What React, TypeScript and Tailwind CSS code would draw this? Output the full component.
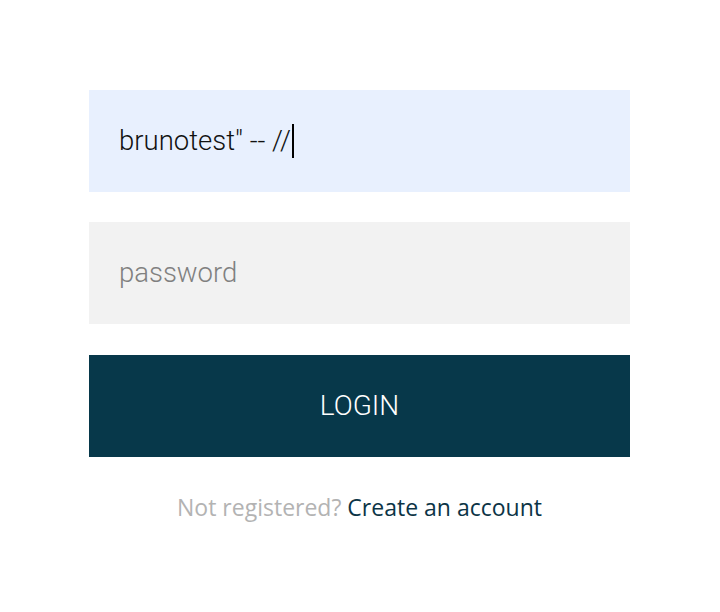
export default function App() {
  return (
    <div className="min-h-screen bg-white">
      <div className="pt-[90px] pl-[89px]">
        <form className="w-[541px] flex flex-col">
          <div className="h-[102px] bg-[#e8f0fe] flex items-center pl-[30px] font-['Roboto',sans-serif] font-light text-[27.5px] text-[#111]">
            <span>brunotest&quot; -- //</span>
            <span className="inline-block w-[2px] h-[34px] bg-black ml-[1px]" />
          </div>
          <div className="mt-[30px] h-[102px] bg-[#f2f2f2] flex items-center pl-[30px] font-['Roboto',sans-serif] font-light text-[27.5px] text-[#808080]">
            password
          </div>
          <button
            type="button"
            className="mt-[31px] h-[102px] bg-[#07384a] text-white font-['Roboto',sans-serif] font-light text-[28px] uppercase flex items-center justify-center"
          >
            Login
          </button>
        </form>
        <p className="w-[541px] mt-[33px] text-center font-['Open_Sans',sans-serif] text-[23px] text-[#b3b3b3]">
          Not registered? <a className="text-[#0c3446]">Create an account</a>
        </p>
      </div>
    </div>
  );
}
